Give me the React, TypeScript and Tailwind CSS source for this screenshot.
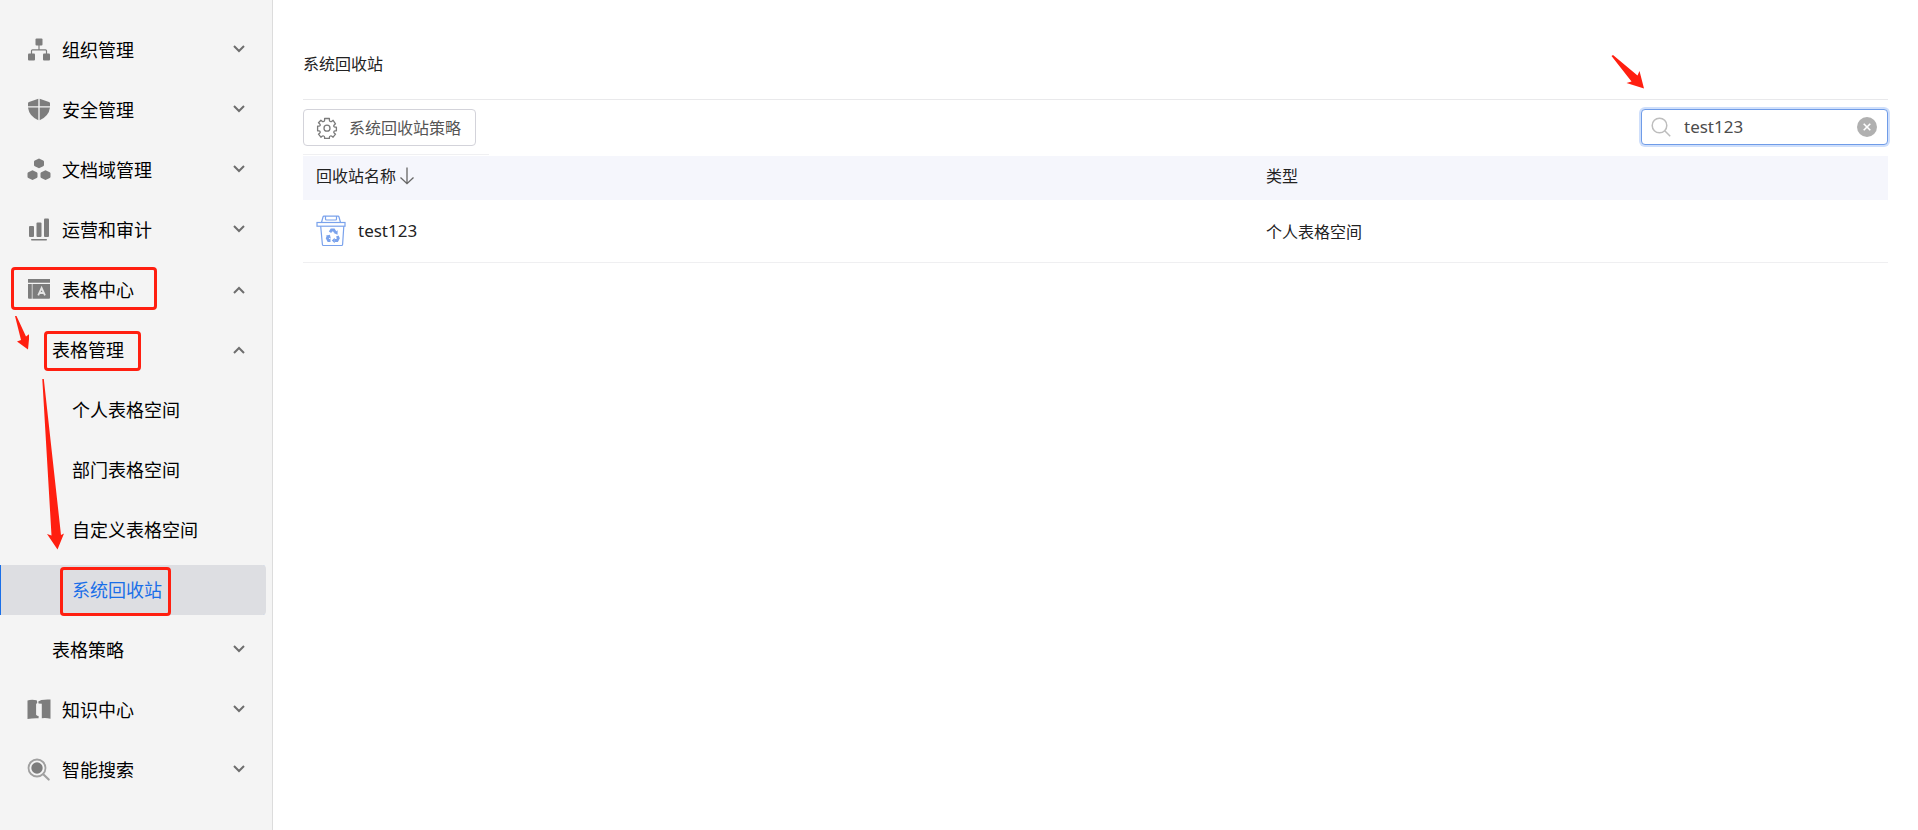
import type { ReactNode } from 'react';

type NavItem = {
  label: string;
  level: 0 | 1 | 2;
  icon?: ReactNode;
  open?: boolean;
  active?: boolean;
  mark?: string;
};

const levelPadding = {
  0: 'pl-[27px]',
  1: 'pl-[52px]',
  2: 'pl-[72px]',
};

function NavIcon({ children }: { children: ReactNode }) {
  return (
    <svg
      viewBox="0 0 24 24"
      className="mr-[11px] h-6 w-6 shrink-0"
      fill="#7d7d7d"
      aria-hidden="true"
    >
      {children}
    </svg>
  );
}

const orgIcon = (
  <NavIcon>
    <rect x="8.5" y="0.5" width="7" height="7" rx="1" />
    <rect x="1" y="15.5" width="7" height="7" rx="1" />
    <rect x="16" y="15.5" width="7" height="7" rx="1" />
    <path
      d="M12 7v5M4.5 16v-3.2q0-1 1-1h13q1 0 1 1V16"
      fill="none"
      stroke="#7d7d7d"
      strokeWidth="1.2"
    />
  </NavIcon>
);

const shieldIcon = (
  <NavIcon>
    <path d="M11.3 0.8v7.4H1V5.3q0-1 1-1.3Q7.5 2.4 11.3 0.8z" />
    <path d="M12.7 0.8v7.4H23V5.3q0-1-1-1.3Q16.5 2.4 12.7 0.8z" />
    <path d="M1 9.6h10.3v12.6Q2.2 18.5 1 9.6z" />
    <path d="M23 9.6H12.7v12.6Q21.8 18.5 23 9.6z" />
  </NavIcon>
);

const domainIcon = (
  <NavIcon>
    <path d="M12 0.5l4.2 2q0.8 0.4 0.8 1.2v3.3q0 0.8-0.8 1.2L12 10.3 7.8 8.2Q7 7.8 7 7V3.7q0-0.8 0.8-1.2z" />
    <path d="M5.5 12.3l4.2 2q0.8 0.4 0.8 1.2v3.3q0 0.8-0.8 1.2L5.5 22.1 1.3 20Q0.5 19.6 0.5 18.8v-3.3q0-0.8 0.8-1.2z" />
    <path d="M18.5 12.3l4.2 2q0.8 0.4 0.8 1.2v3.3q0 0.8-0.8 1.2l-4.2 2.1-4.2-2.1q-0.8-0.4-0.8-1.2v-3.3q0-0.8 0.8-1.2z" />
  </NavIcon>
);

const chartIcon = (
  <NavIcon>
    <rect x="2" y="8" width="5" height="11" rx="1" />
    <rect x="9.5" y="4.5" width="5" height="14.5" rx="1" />
    <rect x="17" y="0.5" width="5" height="18.5" rx="1" />
    <rect x="4" y="21" width="16" height="1.5" rx="0.7" />
  </NavIcon>
);

const tableIcon = (
  <NavIcon>
    <path d="M1 1h22v3.7H1zM1 6h3.8v14.8H2q-1 0-1-1z" />
    <path d="M5.5 6H23V19.800q0 1-1 1H5.500z" />
    <path
      d="M11.200 17.300l3.400-7.300 3.400 7.300M12.600 15h4"
      fill="none"
      stroke="#e4e4e4"
      strokeWidth="1.800"
    />
  </NavIcon>
);

const bookIcon = (
  <NavIcon>
    <path d="M0.5 2.500q3.500-1.200 9.200-0.300l0.600 2.200-1.200 1.800v10.600l1 1 1.500 0.200v2.200q-5.500-0.300-11.100 0.800z" />
    <path d="M23.500 1.500v19.200q-4.500-1.200-8.700-0.500V5.800l-3.300-0.200-0.200-2.200 3-1.400q4.500-0.900 9.200-0.500z" />
  </NavIcon>
);

const searchIcon = (
  <NavIcon>
    <circle cx="10" cy="10" r="8.500" fill="none" stroke="#a0a0a0" strokeWidth="1.800" />
    <circle cx="10" cy="10" r="5.700" />
    <path d="M16.500 16.500l5.200 5" stroke="#a0a0a0" strokeWidth="2.200" strokeLinecap="round" />
  </NavIcon>
);

const navItems: NavItem[] = [
  { label: '组织管理', level: 0, icon: orgIcon, open: false },
  { label: '安全管理', level: 0, icon: shieldIcon, open: false },
  { label: '文档域管理', level: 0, icon: domainIcon, open: false },
  { label: '运营和审计', level: 0, icon: chartIcon, open: false },
  {
    label: '表格中心',
    level: 0,
    icon: tableIcon,
    open: true,
    mark: 'top-[2px] left-[11px] h-[43px] w-[146px]',
  },
  {
    label: '表格管理',
    level: 1,
    open: true,
    mark: 'top-[6px] left-[44px] h-[40px] w-[97px]',
  },
  { label: '个人表格空间', level: 2 },
  { label: '部门表格空间', level: 2 },
  { label: '自定义表格空间', level: 2 },
  {
    label: '系统回收站',
    level: 2,
    active: true,
    mark: 'top-[2px] left-[60px] h-[49px] w-[111px]',
  },
  { label: '表格策略', level: 1, open: false },
  { label: '知识中心', level: 0, icon: bookIcon, open: false },
  { label: '智能搜索', level: 0, icon: searchIcon, open: false },
];

function Chevron({ open }: { open: boolean }) {
  return (
    <svg
      viewBox="0 0 12 8"
      className={`mr-[21px] ml-auto h-2 w-3 ${open ? '' : 'mb-[2px]'}`}
      fill="none"
      stroke="#6e6e6e"
      strokeWidth="2"
      aria-hidden="true"
    >
      <path d={open ? 'M1 7l5-5 5 5' : 'M1 1l5 5 5-5'} />
    </svg>
  );
}

function NavRow({ item }: { item: NavItem }) {
  const rowClass = `flex h-[50px] w-full items-center text-left ${levelPadding[item.level]}`;

  return (
    <li className="relative pr-[6px]">
      {item.open === undefined ? (
        <a
          href="#"
          aria-current={item.active ? 'page' : undefined}
          className={`${rowClass} ${
            item.active
              ? 'rounded-r bg-[#dddee2] text-[#1a6fe8] shadow-[inset_1px_0_0_#1a6fe8]'
              : ''
          }`}
        >
          {item.label}
        </a>
      ) : (
        <button type="button" aria-expanded={item.open} className={rowClass}>
          {item.icon}
          {item.label}
          <Chevron open={item.open} />
        </button>
      )}
      {item.mark && (
        <span
          className={`pointer-events-none absolute rounded border-3 border-[#ff1f10] ${item.mark}`}
        />
      )}
    </li>
  );
}

function Sidebar() {
  return (
    <nav className="relative w-[273px] shrink-0 border-r border-[#dcdcdc] bg-[#f4f4f4] pt-[25px] text-lg text-black">
      <ul className="flex flex-col gap-[10px]">
        {navItems.map((item) => (
          <NavRow key={item.label} item={item} />
        ))}
      </ul>
      <svg
        viewBox="0 0 14 34"
        className="pointer-events-none absolute top-[316px] left-[15px] h-[34px] w-[14px]"
        fill="#ff1f10"
        aria-hidden="true"
      >
        <path d="M0 0h1.500l9.500 20.500 3.500-2.500-1.500 15.500L2 25.500l4-1.500z" />
      </svg>
      <svg
        viewBox="0 0 24 172"
        className="pointer-events-none absolute top-[378px] left-[42px] h-[172px] w-[24px]"
        fill="#ff1f10"
        aria-hidden="true"
      >
        <path d="M0.300 1h1.500l17.200 156 3-1.500L15.500 171.500 5 156l4.500 1.500z" />
      </svg>
    </nav>
  );
}

function GearIcon() {
  return (
    <svg
      viewBox="0 0 22 22"
      className="h-[22px] w-[22px]"
      fill="none"
      stroke="#7a7a7a"
      strokeWidth="1.3"
      strokeLinejoin="round"
      aria-hidden="true"
    >
      <path d="M8.6 1.5h4.8v1.8q0 0.9 0.9 1.2 0.9 0.4 1.6-0.2l1.2-1 2.4 3.5-1.3 1.2q-0.7 0.7-0.3 1.5 0.3 0.7 1.2 0.7h1.3v3.6h-1.3q-0.9 0-1.2 0.7-0.4 0.8 0.3 1.5l1.3 1.2-2.4 3-1.2-1q-0.7-0.6-1.6-0.2-0.9 0.3-0.9 1.2v1.3H8.6v-1.3q0-0.9-0.9-1.2-0.9-0.4-1.6 0.2l-1.2 1-2.4-3 1.3-1.2q0.7-0.7 0.3-1.5-0.3-0.7-1.2-0.7H1.6V9.2h1.3q0.9 0 1.2-0.7 0.4-0.8-0.3-1.5L2.5 5.8l2.4-2.5 1.2 1q0.7 0.6 1.6 0.2 0.9-0.3 0.9-1.2z" />
      <circle cx="11" cy="11.2" r="3" />
    </svg>
  );
}

function RecycleBinIcon() {
  return (
    <svg
      viewBox="0 0 30 32"
      className="h-8 w-[30px] shrink-0"
      fill="none"
      stroke="#7aa2ec"
      strokeWidth="1.2"
      aria-hidden="true"
    >
      <path d="M5.5 7.500L7 2q0.200-0.800 1-0.800h14q0.800 0 1 0.800l1.500 5.500M9.500 1.500v2.500q0 1 1 1h9q1 0 1-1V1.500" />
      <rect x="1" y="7.500" width="28" height="3.700" />
      <path d="M4.700 11.200l1.700 18.300q0.100 1 1 1h18.200q0.900 0 1-1l1.200-18.300" />
      <path
        d="M14 17.200l1.500-2.200h2.300l1.500 2.200M21.300 21l1 2.300-1.200 2.200h-2.600M14.500 25.500h-2l-1.200-2.200 1-2.300"
        strokeWidth="2.800"
      />
      <path
        d="M21.700 15.200l-0.200 4.500-3.800-1.700zM18.700 22.700v5.600l-2.900-2.800zM9.700 20.700l4.200-1 1 4z"
        fill="#7aa2ec"
        stroke="none"
      />
    </svg>
  );
}

function SearchBox() {
  return (
    <div className="relative w-[247px]">
      <label className="flex h-9 items-center rounded border border-[#6f9ce8] bg-white pr-[10px] pl-[9px] ring-2 ring-[#cfdffb]">
        <span className="sr-only" />
        <svg
          viewBox="0 0 20 20"
          className="h-5 w-5 shrink-0"
          fill="none"
          stroke="#bdbdbd"
          strokeWidth="1.5"
          aria-hidden="true"
        >
          <circle cx="8.5" cy="8.5" r="7.3" />
          <path d="M13.7 13.7l5.5 5.5" />
        </svg>
        <input
          type="text"
          aria-label="搜索"
          defaultValue="test123"
          className="ml-[13px] h-8 min-w-0 flex-1 bg-transparent text-[17px] leading-8 text-[#4c4c4c] outline-none"
        />
        <button
          type="button"
          aria-label="清除"
          className="flex h-5 w-5 shrink-0 items-center justify-center rounded-full bg-[#b0b0b0]"
        >
          <svg
            viewBox="0 0 8 8"
            className="h-2 w-2"
            stroke="white"
            strokeWidth="1.6"
            aria-hidden="true"
          >
            <path d="M0.7 0.7l6.6 6.6M7.3 0.7L0.7 7.3" />
          </svg>
        </button>
      </label>
      <svg
        viewBox="0 0 34 36"
        className="pointer-events-none absolute top-[-55px] left-[-30px] h-9 w-[34px]"
        fill="#ff1f10"
        aria-hidden="true"
      >
        <path d="M0.5 2l1.5-1 24.500 20.500 2-4.500L33 34.500 15.500 29l5-1.500z" />
      </svg>
    </div>
  );
}

export default function App() {
  return (
    <div className="flex min-h-screen bg-white font-['Noto_Sans','Noto_Sans_CJK_SC',sans-serif]">
      <Sidebar />
      <main className="min-w-0 flex-1 px-[30px] text-base text-[#222]">
        <h1 className="border-b border-[#e9e9eb] pt-[52px] pb-[23px] leading-6">
          系统回收站
        </h1>
        <div className="flex items-start justify-between pt-[9px]">
          <div className="border-b border-[#f0f0f2] pr-[13px] pb-2">
            <button
              type="button"
              className="flex h-[37px] items-center gap-[11px] rounded border border-[#d3d3da] pr-[14px] pl-[12px] text-[#555]"
            >
              <GearIcon />
              系统回收站策略
            </button>
          </div>
          <SearchBox />
        </div>
        <table className="mt-px w-full table-fixed text-left">
          <thead>
            <tr className="h-11 bg-[#f5f6fc]">
              <th scope="col" className="w-3/5 px-[13px] pb-1 font-normal">
                <button type="button" className="flex items-center gap-[3px]">
                  回收站名称
                  <svg
                    viewBox="0 0 16 18"
                    className="h-[18px] w-4"
                    fill="none"
                    stroke="#666"
                    strokeWidth="1.3"
                    aria-hidden="true"
                  >
                    <path d="M8 0.5v16M1.5 10.5l6.5 6.2 6.5-6.2" />
                  </svg>
                </button>
              </th>
              <th scope="col" className="px-3 pb-1 font-normal">
                类型
              </th>
            </tr>
          </thead>
          <tbody>
            <tr className="h-[62px] border-b border-[#efeff1]">
              <td className="px-[13px]">
                <div className="flex items-center gap-3 text-[17px]">
                  <RecycleBinIcon />
                  test123
                </div>
              </td>
              <td className="px-3 pt-[2px]">个人表格空间</td>
            </tr>
          </tbody>
        </table>
      </main>
    </div>
  );
}
